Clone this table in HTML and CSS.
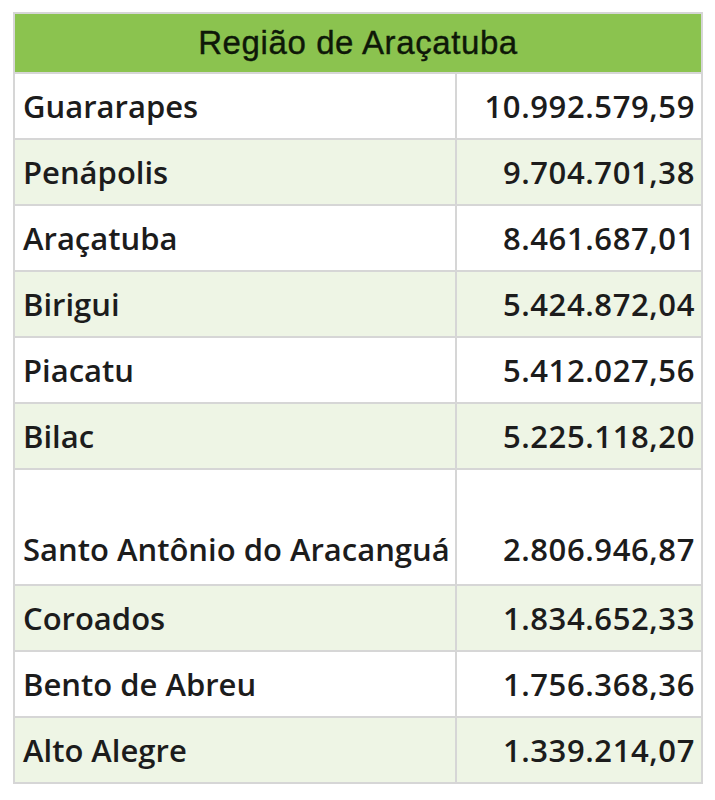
FILE: index.html
```html
<!DOCTYPE html>
<html lang="pt">
<head>
<meta charset="utf-8">
<title>Região de Araçatuba</title>
<link rel="stylesheet" href="styles.css">
</head>
<body>
<table class="tbl">
  <colgroup>
    <col class="c-name">
    <col class="c-val">
  </colgroup>
  <thead>
    <tr><th colspan="2" class="head">Região de Araçatuba</th></tr>
  </thead>
  <tbody>
    <tr><td class="name">Guararapes</td><td class="val">10.992.579,59</td></tr>
    <tr class="alt"><td class="name">Penápolis</td><td class="val">9.704.701,38</td></tr>
    <tr><td class="name">Araçatuba</td><td class="val">8.461.687,01</td></tr>
    <tr class="alt"><td class="name">Birigui</td><td class="val">5.424.872,04</td></tr>
    <tr><td class="name">Piacatu</td><td class="val">5.412.027,56</td></tr>
    <tr class="alt"><td class="name">Bilac</td><td class="val">5.225.118,20</td></tr>
    <tr class="tall"><td class="name">Santo Antônio do Aracanguá</td><td class="val">2.806.946,87</td></tr>
    <tr class="alt"><td class="name">Coroados</td><td class="val">1.834.652,33</td></tr>
    <tr><td class="name">Bento de Abreu</td><td class="val">1.756.368,36</td></tr>
    <tr class="alt"><td class="name">Alto Alegre</td><td class="val">1.339.214,07</td></tr>
  </tbody>
</table>
</body>
</html>
```
FILE: styles.css
```css
html, body {
  margin: 0;
  padding: 0;
  background: #ffffff;
}
body {
  padding: 12px 0 0 13px;
}
.tbl {
  border-collapse: collapse;
  width: 688px;
  table-layout: fixed;
  border: 2px solid #d6d6d6;
}
.c-name {
  width: 442px;
}
.c-val {
  width: 246px;
}
.head {
  background: #8bc34f;
  color: #0e1808;
  font-family: "Liberation Sans", Arial, sans-serif;
  font-weight: normal;
  font-size: 33px;
  letter-spacing: 0.6px;
  -webkit-text-stroke: 0.4px #0e1808;
  height: 58px;
  padding: 0;
  text-align: center;
  border-bottom: 2px solid #d6d6d6;
}
td {
  border: 2px solid #d6d6d6;
  height: 64px;
  padding: 0 7px 0 8px;
  font-family: "Open Sans", sans-serif;
  font-weight: 600;
  font-size: 31px;
  letter-spacing: 0;
  color: #1c1c1c;
  white-space: nowrap;
  vertical-align: middle;
}
.name {
  text-align: left;
}
.val {
  text-align: right;
  letter-spacing: 0.6px;
  padding-right: 6px;
}
.alt td {
  background: #eef5e5;
}
.tall td {
  height: 100px;
  vertical-align: bottom;
  padding-bottom: 14px;
}
```
